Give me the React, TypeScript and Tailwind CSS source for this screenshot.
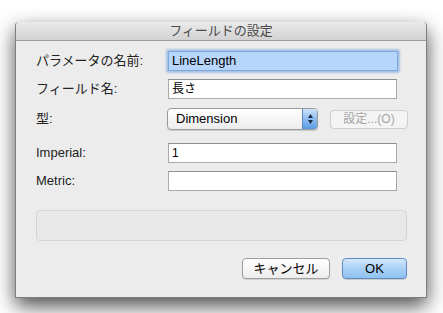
const font = { fontFamily: '"Liberation Sans", "Noto Sans CJK JP", sans-serif' };

const Label = ({ children }: { children: React.ReactNode }) => (
  <div className="w-[132px] shrink-0 text-[13px] text-[#222]">{children}</div>
);

const TextField = ({ value }: { value: string }) => (
  <div className="w-[229px] h-[20px] bg-white border border-[#a9a9a9] border-t-[#8e8e8e] px-[3px] text-[12px] leading-[18px] text-black">
    {value}
  </div>
);

const App = () => {
  return (
    <div className="w-[443px] h-[313px] bg-white" style={font}>
      <div className="pt-[22px] pl-[15px]">
        <div className="w-[412px] h-[276px] flex flex-col bg-[#ececec] rounded-t-[4px] border-x border-b border-[#7e7e7e] shadow-[0_8px_20px_rgba(0,0,0,0.7)]">
          {/* title bar */}
          <div className="h-[19px] shrink-0 rounded-t-[4px] bg-gradient-to-b from-[#ebebeb] to-[#d2d2d2] border-b border-[#9c9c9c] flex items-center justify-center text-[13px] text-[#4a4a4a]">
            フィールドの設定
          </div>

          <div className="flex flex-col pl-[20px]">
            <div className="flex items-center mt-[10px]">
              <Label>パラメータの名前:</Label>
              <div className="w-[230px] h-[20px] bg-[#b8d6fb] border border-[#7aa7dc] shadow-[0_0_2px_2px_rgba(110,160,220,0.55)] rounded-[1px] px-[3px] text-[13px] leading-[18px] text-black">
                LineLength
              </div>
            </div>

            <div className="flex items-center mt-[8px]">
              <Label>フィールド名:</Label>
              <TextField value="長さ" />
            </div>

            <div className="flex items-center mt-[9px]">
              <div className="w-[131px] shrink-0 text-[13px] text-[#222]">型:</div>
              <div className="w-[151px] h-[22px] flex items-center justify-between rounded-[4px] border border-[#9b9b9b] bg-gradient-to-b from-white to-[#ececec] shadow-[0_1px_1px_rgba(0,0,0,0.15)] pl-[8px] text-[13px] text-black">
                <span>Dimension</span>
                <div className="w-[15px] h-[20px] rounded-r-[3px] bg-gradient-to-b from-[#cfe3fa] via-[#8dbcf0] to-[#5a9be3] border-l border-[#5c88c0] flex flex-col items-center justify-center gap-[2px]">
                  <svg width="5" height="4" viewBox="0 0 5 4">
                    <path d="M2.5 0 L5 4 L0 4 Z" fill="#1c2a44" />
                  </svg>
                  <svg width="5" height="4" viewBox="0 0 5 4">
                    <path d="M0 0 L5 0 L2.5 4 Z" fill="#1c2a44" />
                  </svg>
                </div>
              </div>
              <div className="ml-[12px] w-[78px] h-[19px] rounded-[4px] border border-[#cdcdcd] bg-[#f4f4f4] flex items-center justify-center text-[12px] text-[#a4a4a4]">
                設定...(O)
              </div>
            </div>

            <div className="flex items-center mt-[13px]">
              <Label>Imperial:</Label>
              <TextField value="1" />
            </div>

            <div className="flex items-center mt-[8px]">
              <Label>Metric:</Label>
              <TextField value="" />
            </div>

            <div className="mt-[19px] w-[371px] h-[31px] rounded-[4px] border border-[#d4d4d4] bg-[#e8e8e8]" />

            <div className="flex justify-end gap-[12px] mt-[17px] w-[371px]">
              <div className="w-[88px] h-[21px] rounded-[4px] border border-[#9e9e9e] bg-gradient-to-b from-white to-[#ededed] shadow-[0_1px_1px_rgba(0,0,0,0.12)] flex items-center justify-center text-[13px] text-black">
                キャンセル
              </div>
              <div className="w-[65px] h-[21px] rounded-[4px] border border-[#5f8ac2] bg-gradient-to-b from-[#d4e8fb] via-[#a9d0f6] to-[#8fc2f1] shadow-[0_1px_1px_rgba(0,0,0,0.15)] flex items-center justify-center text-[13px] text-black">
                OK
              </div>
            </div>
          </div>
        </div>
      </div>
    </div>
  );
};

export default App;
